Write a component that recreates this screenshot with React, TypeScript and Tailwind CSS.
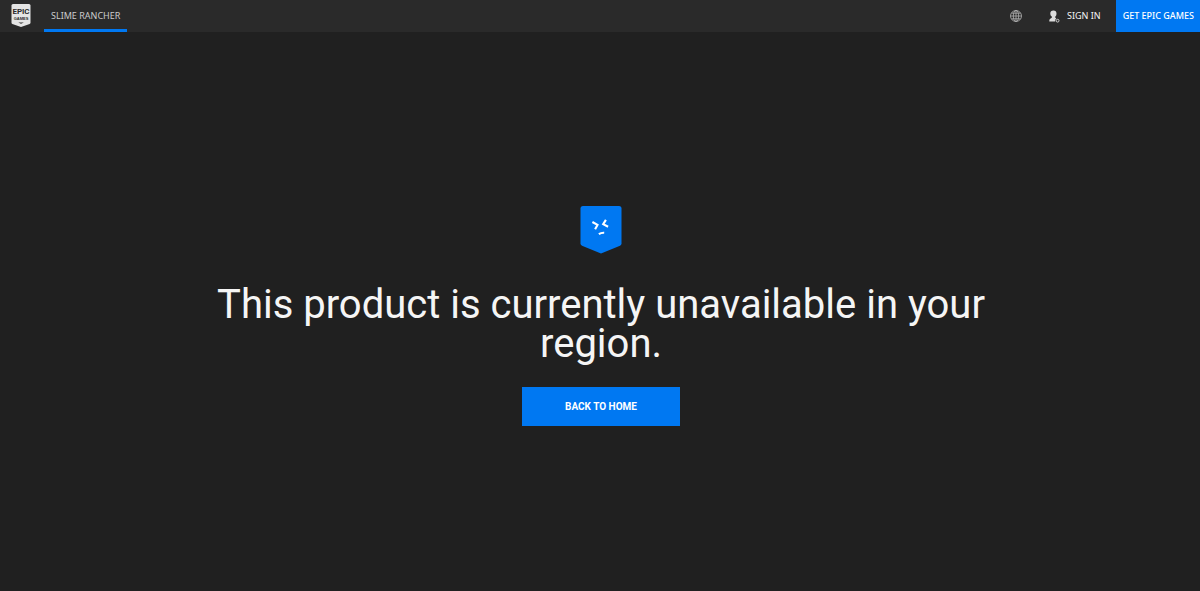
import type { ReactNode } from "react";

function EpicLogo() {
  return (
    <svg width="20" height="24" viewBox="0 0 20 24" aria-label="Epic Games" role="img">
      <path d="M2 1h16q1.500 0 1.500 1.500v17.300q0 .9-.9 1.300L10 24l-8.600-2.900q-.9-.4-.9-1.300V2.500Q.5 1 2 1z" fill="#e4e4e4" />
      <text x="10" y="11" textAnchor="middle" fill="#2a2a2a" className="font-['Roboto',sans-serif] text-[8px] font-bold">
        EPIC
      </text>
      <text x="10" y="17" textAnchor="middle" fill="#2a2a2a" className="font-['Liberation_Sans',sans-serif] text-[4px] font-bold">
        GAMES
      </text>
      <path d="M7.300 19.400h5.600L10 20.700z" fill="#2a2a2a" />
    </svg>
  );
}

function GlobeIcon() {
  return (
    <svg width="12" height="12" viewBox="0 0 12 12" fill="none" stroke="#b4b4b4" strokeWidth=".8" aria-hidden="true">
      <circle cx="6" cy="6" r="5.500" />
      <ellipse cx="6" cy="6" rx="2.700" ry="5.500" />
      <path d="M6 .5v11M.5 6h11M1.500 3.200h9M1.500 8.800h9" />
    </svg>
  );
}

function UserIcon() {
  return (
    <svg width="11" height="13" viewBox="0 0 11 13" aria-hidden="true">
      <path d="M4.400.5c2.100 0 3.100 1.200 3.100 3 0 1.500-.5 2.500-1.200 3.100v1.200l1 .6A2.800 2.800 0 0 0 6.300 11.500H.3c0-1.800.3-2.600 1.300-3l1.200-.7V6.600C1.900 6 1.300 5 1.300 3.500c0-1.800 1.100-3 3.100-3z" fill="#dcdcdc" />
      <circle cx="8.600" cy="10.700" r="1.400" fill="none" stroke="#cfcfcf" strokeWidth="1" />
    </svg>
  );
}

function SadShield() {
  return (
    <svg width="42" height="48" viewBox="0 0 42 48" aria-hidden="true">
      <path d="M3 0h36q2.500 0 2.500 2.500v35q0 1.500-1.500 2.200L21 47.500 2 39.700Q.5 39 .5 37.500v-35Q.5 0 3 0z" fill="#0078f2" />
      <g fill="none" stroke="#fff" strokeWidth="2.100">
        <path d="M12.400 16l5.100 2.900-2.400 4.300" />
        <path d="M25.900 13.900l-2.700 4.300 4.900 2.600" />
        <path d="M18.900 28.200q2.200-1.700 5.300-1.500" />
      </g>
    </svg>
  );
}

function NavLink({ children }: { children: ReactNode }) {
  return (
    <a href="#" className="flex items-center border-y-3 border-t-transparent border-b-[#0078f2] px-[7px] text-[#cccccc]">
      {children}
    </a>
  );
}

export default function App() {
  return (
    <div className="flex min-h-screen flex-col bg-[#202020] font-['Noto_Sans',sans-serif] text-[#f5f5f5]">
      <header className="flex h-8 items-stretch bg-[#2a2a2a] text-[9px] uppercase">
        <a href="#" className="flex w-11 items-center pb-0.5 pl-[11px]">
          <EpicLogo />
        </a>
        <nav className="flex">
          <NavLink>Slime Rancher</NavLink>
        </nav>
        <div className="ml-auto flex items-stretch">
          <button type="button" aria-label="Language" className="mr-[27px] flex items-center">
            <GlobeIcon />
          </button>
          <a href="#" className="mr-[15px] flex items-center gap-[7px]">
            <UserIcon />
            Sign in
          </a>
          <a href="#" className="flex items-center justify-center bg-[#0078f2] pr-[6px] pl-[7px] font-medium text-white">
            Get Epic Games
          </a>
        </div>
      </header>

      <main className="flex grow flex-col items-center justify-center pt-[9px] pr-4 pl-[18px] font-['Roboto',sans-serif]">
        <SadShield />
        <h1 className="mt-[31px] max-w-[800px] text-center text-[40px] leading-[39px]">
          This product is currently unavailable in your region.
        </h1>
        <a
          href="#"
          className="mt-6 flex h-[39px] w-[158px] items-center justify-center bg-[#0078f2] text-[10px] font-bold uppercase text-white"
        >
          Back to home
        </a>
      </main>
    </div>
  );
}
